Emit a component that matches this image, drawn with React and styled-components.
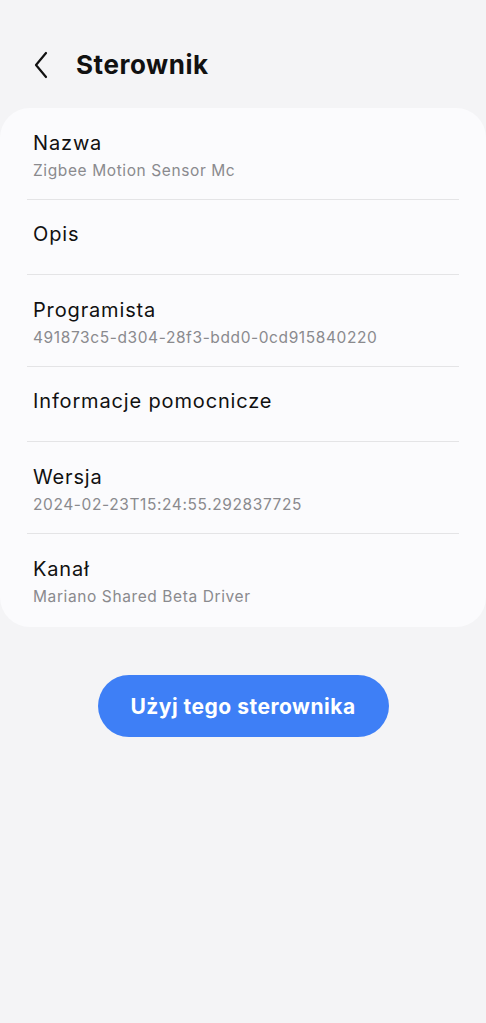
import React from 'react';
import styled, { createGlobalStyle } from 'styled-components';

const Global = createGlobalStyle`
    html, body {
        margin: 0;
        padding: 0;
        background: #f4f4f6;
        font-family: Inter, Roboto, "Noto Sans", sans-serif;
    }
`;

const Page = styled.div`
    min-height: 1023px;
    background: #f4f4f6;
    display: flex;
    flex-direction: column;
`;

const Header = styled.div`
    height: 108px;
    display: flex;
    align-items: center;
    padding: 21px 0 0 30px;
    box-sizing: border-box;
    gap: 24px;
`;

const Back = styled.button`
    border: none;
    background: none;
    padding: 0;
    width: 22px;
    height: 28px;
    display: flex;
    align-items: center;
    justify-content: center;
    color: #111;
`;

const Title = styled.h1`
    margin: 0;
    font-size: 26px;
    font-weight: 700;
    color: #111;
    letter-spacing: 0.55px;
`;

const Card = styled.div`
    background: #fbfbfd;
    border-radius: 30px;
    padding: 0 27px;
`;

const Row = styled.div`
    display: flex;
    flex-direction: column;
    padding: ${p => p.sub ? '22px 6px 18px' : '21px 6px 27px'};
    padding-bottom: ${p => p.last ? '20px' : undefined};
    border-bottom: ${p => p.last ? 'none' : '1.5px solid #e4e4e6'};
    gap: 4px;
`;

const Label = styled.div`
    font-size: 20px;
    line-height: 26px;
    color: #111;
    letter-spacing: 0.85px;
`;

const Sub = styled.div`
    font-size: 15.5px;
    line-height: 21px;
    color: #8a8a8e;
    letter-spacing: 0.6px;
`;

const ButtonWrap = styled.div`
    display: flex;
    justify-content: center;
    padding-top: 48px;
`;

const Primary = styled.button`
    width: 291px;
    height: 62px;
    border: none;
    border-radius: 31px;
    background: #3e7ff6;
    color: #fff;
    font-family: Inter, Roboto, "Noto Sans", sans-serif;
    font-size: 21px;
    font-weight: 700;
    letter-spacing: 0.5px;
`;

const rows = [
    { label: 'Nazwa', sub: 'Zigbee Motion Sensor Mc' },
    { label: 'Opis' },
    { label: 'Programista', sub: '491873c5-d304-28f3-bdd0-0cd915840220' },
    { label: 'Informacje pomocnicze' },
    { label: 'Wersja', sub: '2024-02-23T15:24:55.292837725' },
    { label: 'Kanał', sub: 'Mariano Shared Beta Driver' },
];

export default function App() {
    return (
        <Page>
            <Global />
            <Header>
                <Back aria-label="Wstecz">
                    <svg width="18" height="28" viewBox="0 0 18 28" fill="none">
                        <path d="M14 2 L4 14 L14 26" stroke="#111" strokeWidth="2.2" strokeLinecap="round" strokeLinejoin="round" />
                    </svg>
                </Back>
                <Title>Sterownik</Title>
            </Header>
            <Card>
                {rows.map((r, i) => (
                    <Row key={r.label} sub={!!r.sub} last={i === rows.length - 1}>
                        <Label>{r.label}</Label>
                        {r.sub && <Sub>{r.sub}</Sub>}
                    </Row>
                ))}
            </Card>
            <ButtonWrap>
                <Primary>Użyj tego sterownika</Primary>
            </ButtonWrap>
        </Page>
    );
}
